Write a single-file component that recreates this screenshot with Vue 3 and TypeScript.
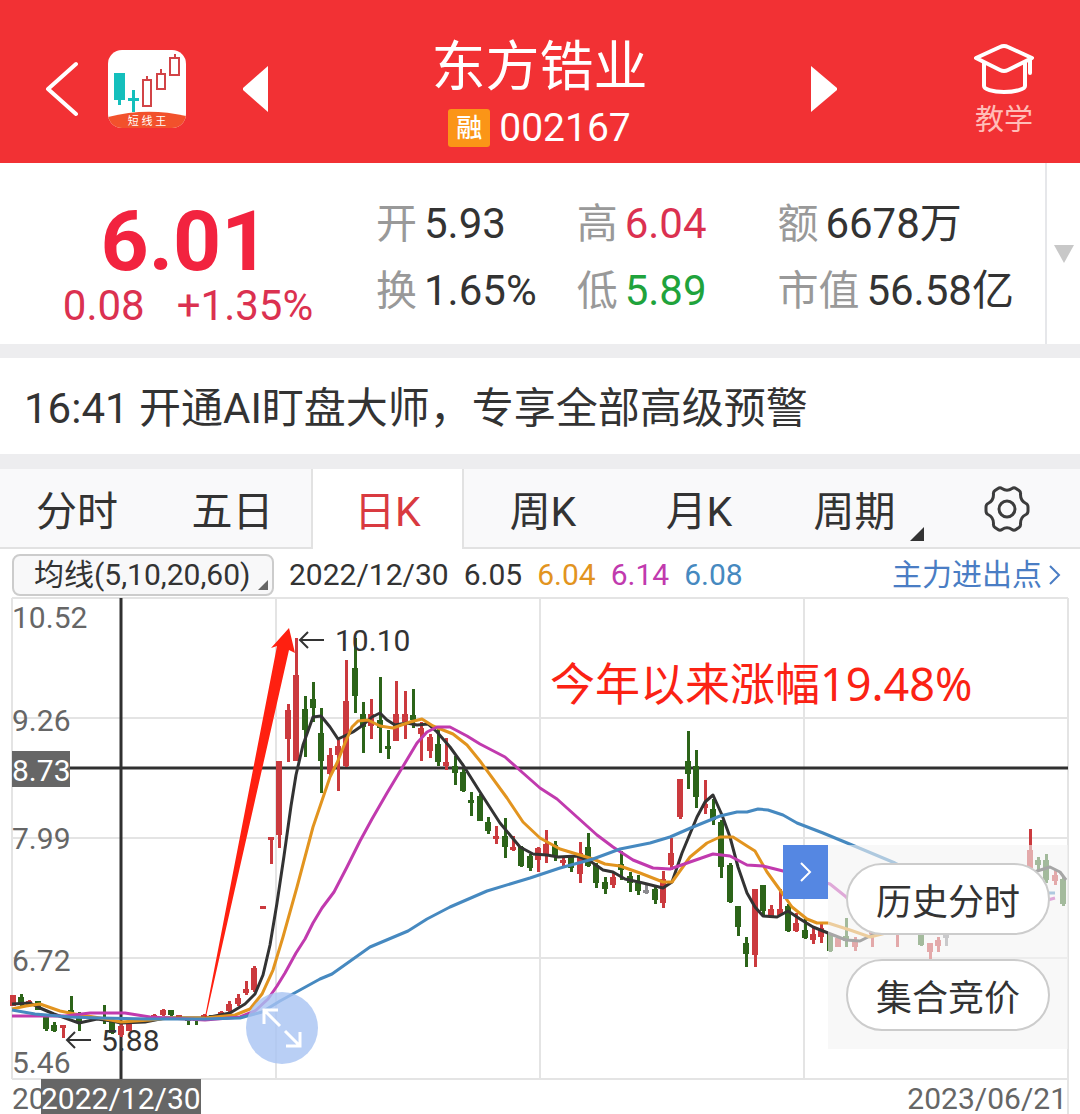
<script setup lang="ts">
import { ref } from 'vue'

type Tone = 'up' | 'down' | 'flat'
type Candle = [x: number, high: number, low: number, bodyTop: number, bodyBottom: number, tone: Tone]
type Point = [number, number]

const quotes = [
  { label: '开', value: '5.93', tone: '' },
  { label: '高', value: '6.04', tone: 'rise' },
  { label: '额', value: '6678万', tone: '' },
  { label: '换', value: '1.65%', tone: '' },
  { label: '低', value: '5.89', tone: 'fall' },
  { label: '市值', value: '56.58亿', tone: '' },
]

const tabs = ['分时', '五日', '日K', '周K', '月K', '周期']
const activeTab = ref('日K')

const averages = [
  { value: '6.05', cls: 'ma5' },
  { value: '6.04', cls: 'ma10' },
  { value: '6.14', cls: 'ma20' },
  { value: '6.08', cls: 'ma60' },
]

const axis = [
  { y: 628, text: '10.52' },
  { y: 731, text: '9.26' },
  { y: 849, text: '7.99' },
  { y: 971, text: '6.72' },
  { y: 1073, text: '5.46' },
]

const candles: Candle[] = [
  [13, 995, 1006, 995, 1006, 'up'], [21, 994, 1006, 997, 1005, 'down'], [29, 1000, 1006, 1001, 1006, 'up'],
  [38, 1001, 1010, 1001, 1010, 'down'], [46, 1014, 1031, 1016, 1029, 'down'], [54, 1022, 1032, 1025, 1031, 'down'],
  [63, 1025, 1038, 1025, 1028, 'up'], [71, 996, 1014, 1010, 1013, 'down'], [79, 1012, 1031, 1017, 1022, 'down'],
  [104, 1005, 1024, 1017, 1019, 'down'], [112, 1020, 1034, 1022, 1033, 'down'], [121, 1024, 1037, 1026, 1035, 'up'],
  [129, 1023, 1031, 1023, 1031, 'up'], [154, 1014, 1020, 1015, 1018, 'up'], [163, 1009, 1016, 1010, 1015, 'up'],
  [171, 1010, 1016, 1010, 1015, 'down'], [179, 1015, 1019, 1015, 1018, 'up'], [188, 1018, 1025, 1018, 1021, 'down'],
  [196, 1018, 1025, 1018, 1021, 'down'], [204, 1014, 1019, 1015, 1018, 'up'], [212, 1015, 1018, 1015, 1018, 'down'],
  [221, 1011, 1016, 1012, 1015, 'up'], [229, 1001, 1015, 1004, 1011, 'up'], [238, 994, 1006, 998, 1004, 'up'],
  [246, 981, 995, 989, 993, 'up'], [254, 966, 992, 968, 990, 'up'], [263, 906, 909, 906, 909, 'up'],
  [271, 837, 864, 837, 840, 'up'], [279, 761, 848, 761, 835, 'up'], [288, 704, 762, 710, 739, 'up'],
  [296, 638, 761, 675, 761, 'up'], [305, 696, 757, 709, 730, 'down'], [313, 682, 722, 699, 708, 'down'],
  [321, 708, 793, 733, 761, 'down'], [330, 748, 775, 755, 774, 'up'], [338, 740, 791, 746, 755, 'up'],
  [346, 660, 767, 701, 766, 'up'], [355, 638, 713, 668, 696, 'down'], [363, 702, 753, 714, 727, 'down'],
  [371, 699, 739, 714, 726, 'up'], [380, 677, 753, 720, 728, 'down'], [388, 730, 759, 746, 749, 'down'],
  [396, 681, 741, 714, 741, 'up'], [405, 691, 739, 714, 722, 'up'], [413, 689, 728, 715, 720, 'down'],
  [421, 722, 761, 728, 734, 'up'], [430, 734, 758, 737, 751, 'up'], [438, 728, 766, 744, 762, 'down'],
  [446, 738, 770, 762, 766, 'up'], [455, 756, 785, 766, 773, 'down'], [463, 769, 792, 772, 791, 'down'],
  [471, 792, 816, 800, 803, 'down'], [480, 794, 821, 796, 821, 'down'], [488, 817, 834, 822, 831, 'down'],
  [496, 826, 844, 836, 839, 'up'], [505, 818, 858, 836, 847, 'down'], [513, 836, 851, 847, 850, 'up'],
  [521, 846, 867, 847, 866, 'down'], [530, 854, 871, 856, 868, 'down'], [538, 847, 872, 848, 860, 'up'],
  [546, 830, 863, 844, 855, 'up'], [555, 841, 861, 845, 857, 'down'], [563, 857, 866, 860, 863, 'up'],
  [571, 855, 872, 857, 868, 'down'], [580, 842, 883, 853, 874, 'up'], [588, 833, 867, 847, 866, 'down'],
  [596, 863, 888, 865, 883, 'down'], [605, 877, 894, 882, 889, 'down'], [613, 872, 888, 877, 885, 'up'],
  [621, 851, 880, 864, 870, 'down'], [630, 872, 892, 876, 883, 'down'], [638, 875, 895, 883, 891, 'down'],
  [646, 883, 894, 890, 893, 'flat'], [655, 887, 904, 889, 900, 'down'], [663, 871, 908, 879, 903, 'up'],
  [671, 838, 870, 853, 865, 'up'], [680, 779, 819, 779, 817, 'up'], [688, 731, 789, 761, 774, 'down'],
  [696, 750, 808, 766, 797, 'down'], [705, 780, 814, 804, 808, 'up'], [713, 799, 825, 809, 820, 'down'],
  [721, 820, 878, 822, 867, 'down'], [730, 863, 903, 865, 902, 'down'], [738, 906, 936, 906, 927, 'down'],
  [746, 937, 967, 943, 954, 'down'], [755, 889, 967, 889, 955, 'up'], [763, 885, 916, 885, 911, 'down'],
  [771, 905, 918, 909, 917, 'up'], [780, 889, 916, 909, 915, 'up'], [788, 904, 932, 906, 931, 'down'],
  [796, 913, 932, 923, 931, 'up'], [805, 917, 939, 930, 938, 'down'], [813, 927, 944, 934, 940, 'up'],
  [821, 923, 943, 928, 937, 'up'], [830, 933, 952, 934, 951, 'down'], [838, 937, 947, 938, 947, 'up'],
  [846, 918, 947, 936, 941, 'down'], [855, 937, 951, 940, 947, 'up'], [872, 920, 947, 928, 934, 'up'],
  [897, 920, 947, 920, 930, 'up'], [921, 930, 946, 932, 945, 'down'], [930, 943, 959, 943, 952, 'up'],
  [938, 937, 952, 940, 946, 'up'], [946, 932, 946, 934, 938, 'flat'], [1030, 829, 870, 850, 868, 'up'],
  [1038, 857, 870, 860, 865, 'down'], [1046, 854, 883, 860, 880, 'down'], [1055, 870, 885, 875, 881, 'up'],
  [1063, 877, 906, 879, 904, 'down'],
]

const ma5: Point[] = [
  [12, 1004], [30, 1003], [40, 1008], [54, 1014], [79, 1023], [97, 1019], [112, 1021], [121, 1023], [145, 1022],
  [165, 1018], [205, 1018], [230, 1013], [245, 1004], [255, 994], [263, 975], [270, 945], [277, 903], [284, 856],
  [291, 806], [296, 775], [303, 745], [313, 717], [321, 716], [330, 727], [338, 739], [353, 732], [363, 725],
  [372, 717], [380, 713], [387, 720], [395, 725], [407, 723], [417, 725], [428, 724], [437, 732], [450, 747],
  [463, 765], [480, 792], [500, 823], [520, 847], [533, 854], [547, 855], [558, 857], [577, 856], [590, 861],
  [603, 870], [613, 872], [625, 879], [643, 883], [663, 888], [672, 882], [682, 853], [697, 817], [705, 802],
  [713, 795], [722, 815], [730, 837], [738, 867], [747, 893], [755, 907], [763, 916], [777, 917], [788, 911],
  [800, 919], [813, 927], [828, 933], [846, 940], [860, 941], [872, 935], [900, 930],
]
const ma5Tail: Point[] = [[1034, 872], [1050, 867], [1060, 872], [1066, 880]]
const ma10: Point[] = [
  [12, 1009], [26, 1006], [40, 1004], [60, 1011], [75, 1014], [100, 1018], [121, 1022], [150, 1020], [170, 1018],
  [205, 1018], [235, 1015], [250, 1009], [262, 994], [273, 970], [283, 937], [297, 887], [313, 827], [330, 777],
  [337, 763], [345, 743], [352, 727], [358, 721], [368, 720], [380, 726], [393, 728], [410, 722], [422, 719],
  [433, 726], [453, 734], [467, 745], [480, 761], [507, 798], [523, 822], [540, 838], [560, 849], [580, 855],
  [593, 859], [605, 864], [620, 866], [640, 873], [663, 882], [672, 882], [690, 857], [707, 843], [720, 837],
  [733, 837], [747, 846], [755, 851], [767, 872], [780, 890], [792, 907], [807, 919], [817, 923], [828, 923],
  [850, 930], [870, 937], [890, 932], [910, 925],
]
const ma20: Point[] = [
  [12, 1016], [65, 1016], [90, 1013], [125, 1013], [150, 1017], [205, 1020], [240, 1017], [255, 1011], [268, 999],
  [277, 986], [285, 973], [296, 953], [305, 939], [313, 923], [322, 908], [334, 892], [347, 867], [360, 841],
  [372, 819], [387, 793], [402, 768], [417, 743], [427, 732], [437, 727], [450, 727], [467, 736], [480, 744],
  [505, 757], [523, 773], [540, 788], [557, 799], [577, 817], [597, 835], [613, 847], [633, 860], [653, 868],
  [670, 869], [690, 862], [713, 854], [730, 856], [747, 865], [763, 866], [783, 871], [800, 876], [830, 884],
  [845, 896], [860, 912],
]
const ma60: Point[] = [
  [12, 1010], [35, 1014], [70, 1017], [100, 1018], [150, 1019], [205, 1019], [240, 1018], [262, 1012], [280, 1001],
  [300, 990], [320, 979], [332, 974], [370, 947], [408, 931], [427, 919], [450, 907], [487, 891], [530, 878],
  [560, 868], [593, 859], [620, 849], [650, 843], [670, 837], [693, 827], [720, 816], [737, 812], [747, 812],
  [758, 809], [768, 810], [783, 815], [797, 823], [823, 833], [852, 845], [895, 863], [920, 875],
]

const lines = [
  { cls: 'ma5', points: ma5 },
  { cls: 'ma5', points: ma5Tail },
  { cls: 'ma10', points: ma10 },
  { cls: 'ma20', points: ma20 },
  { cls: 'ma60', points: ma60 },
  { cls: 'ma20', points: [[1044, 901], [1055, 898]] as Point[] },
  { cls: 'ma60', points: [[1044, 893], [1055, 893]] as Point[] },
]

const toPoints = (points: Point[]) => points.map((p) => p.join(',')).join(' ')
</script>

<template>
  <main class="page">
    <header class="top">
      <div class="side">
        <button class="plain" aria-label="返回">
          <svg width="33" height="56" viewBox="0 0 33 56"><path d="M31 3 3 28 31 53" fill="none" stroke="#fff" stroke-width="4" stroke-linecap="round" stroke-linejoin="round" /></svg>
        </button>
        <button class="plain logo" aria-label="短线王">
          <svg width="78" height="78" viewBox="0 0 78 78">
            <defs><clipPath id="tile"><rect width="78" height="78" rx="14" /></clipPath></defs>
            <g clip-path="url(#tile)">
              <rect width="78" height="78" fill="#fff" />
              <path d="M0 67Q39 57 78 66V78H0Z" fill="#f2512c" />
              <g fill="#14bfbc">
                <path d="M6 23h11v27h-4v5h-3v-5H6ZM24 40h3v8h4v3h-4v11h-3V51h-4v-3h4Z" />
              </g>
              <g fill="none" stroke="#d24447" stroke-width="2">
                <path d="M35 30h8v26h-8ZM39 26v4M49 24h8v15h-8ZM53 19v5M62 8h9v17h-9ZM67 4v4" />
              </g>
              <text x="39" y="75" text-anchor="middle" font-size="11" fill="#fff">短 线 王</text>
            </g>
          </svg>
        </button>
        <button class="plain prev" aria-label="上一只">
          <svg width="26" height="48" viewBox="0 0 26 48"><path d="M26 1V47L1 25V23Z" fill="#fff" /></svg>
        </button>
      </div>
      <div class="title">
        <h1>东方锆业</h1>
        <p class="code"><span class="tag">融</span>002167</p>
      </div>
      <div class="side right">
        <button class="plain" aria-label="下一只">
          <svg width="26" height="48" viewBox="0 0 26 48"><path d="M0 1V47L26 25V23Z" fill="#fff" /></svg>
        </button>
        <button class="plain teach">
          <svg width="60" height="52" viewBox="0 0 60 52" fill="none" stroke="#fff" stroke-width="4" stroke-linecap="round" stroke-linejoin="round">
            <path d="M30 3q2 0 4 1L58 15 34 27q-4 2-8 0L2 15 26 4q2-1 4-1Z" />
            <path d="M10 20V43c0 3 8 6 20 6s21-3 21-6V20M56 16V30" />
          </svg>
          <span>教学</span>
        </button>
      </div>
    </header>

    <section class="quote">
      <div class="price">
        <strong>6.01</strong>
        <p><span>0.08</span><span>+1.35%</span></p>
      </div>
      <dl class="stats">
        <div v-for="q in quotes" :key="q.label">
          <dt>{{ q.label }}</dt>
          <dd :class="q.tone">{{ q.value }}</dd>
        </div>
      </dl>
      <button class="plain more" aria-label="展开">
        <svg width="20" height="18" viewBox="0 0 20 18"><path d="M0 0H20L10 18Z" fill="#c8c8c8" /></svg>
      </button>
    </section>

    <a class="news" href="#news">16:41 开通AI盯盘大师，专享全部高级预警</a>

    <nav class="tabs">
      <button v-for="t in tabs" :key="t" :class="{ active: t === activeTab }" @click="activeTab = t">
        {{ t }}
        <svg v-if="t === '周期'" class="corner" width="14" height="14" viewBox="0 0 14 14"><path d="M14 0V14H0Z" fill="#333" /></svg>
      </button>
      <button class="settings" aria-label="设置">
        <svg class="gear" width="46" height="46" viewBox="0 0 46 46" fill="none" stroke="#3c3c3c" stroke-width="3" stroke-linejoin="round">
          <path d="M14 2.500Q16 1 18 2.500Q23 6 28 2.500Q30 1 32 2.500L35 4.500Q37 6 36.500 8.500Q36.500 15 42 17.500Q44 18.500 44 21V25Q44 27.500 42 28.500Q36.500 31 36.500 37.500Q37 40 35 41.500L32 43.500Q30 45 28 43.500Q23 40 18 43.500Q16 45 14 43.500L11 41.500Q9 40 9.500 37.500Q9.500 31 4 28.500Q2 27.500 2 25V21Q2 18.500 4 17.500Q9.500 15 9.500 8.500Q9 6 11 4.500Z" />
          <circle cx="23" cy="23" r="8" />
        </svg>
      </button>
    </nav>

    <div class="indicator">
      <div class="picker">
        <select aria-label="均线">
          <option>均线(5,10,20,60)</option>
        </select>
        <svg class="mark" width="10" height="10" viewBox="0 0 10 10"><path d="M10 0V10H0Z" fill="#666" /></svg>
      </div>
      <span>2022/12/30</span>
      <span v-for="a in averages" :key="a.cls" :class="a.cls">{{ a.value }}</span>
      <a class="flow" href="#flow">主力进出点
        <svg width="13" height="22" viewBox="0 0 13 22"><path d="M2 2 11 11 2 20" fill="none" stroke="#4a7dc4" stroke-width="2" /></svg>
      </a>
    </div>

    <section class="chart">
      <svg class="plot" viewBox="0 597 1080 517" role="img" aria-label="日K线图">
        <g class="grid">
          <path d="M12 598H1068M12 718H1068M12 838H1068M12 958H1068M12 1079H1068" />
          <path d="M12 598V1079M276 598V1079M540 598V1079M804 598V1079M1068 598V1114" />
        </g>
        <g class="axis">
          <text v-for="a in axis" :key="a.text" x="12" :y="a.y">{{ a.text }}</text>
        </g>
        <path class="cross" d="M12 768H1068M121 598V1079" />
        <g v-for="c in candles" :key="c[0]" :class="c[5]">
          <rect :x="c[0] - 1" :y="c[1]" width="3" :height="c[2] - c[1]" />
          <rect :x="c[0] - 3" :y="c[3]" width="6" :height="c[4] - c[3]" />
        </g>
        <polyline v-for="(l, i) in lines" :key="i" class="line" :class="l.cls" :points="toPoints(l.points)" />
        <g class="note">
          <path d="M324 640H300M308 632 300 640 308 648" />
          <text x="335" y="651">10.10</text>
          <path d="M91 1040H67M75 1032 67 1040 75 1048" />
          <text x="101" y="1051">5.88</text>
        </g>
        <path d="M289 628 295 653 289 650 206 1017H205L277 646 271 648Z" fill="#ff2010" />
        <text class="remark" x="550" y="701">今年以来涨幅19.48%</text>
        <rect x="12" y="751" width="58" height="36" fill="#666" />
        <text class="badge" x="12" y="781">8.73</text>
        <g class="axis">
          <text x="12" y="1109">20</text>
          <text x="1067" y="1109" text-anchor="end">2023/06/21</text>
        </g>
        <rect x="41" y="1079" width="160" height="35" fill="#666" />
        <text class="badge" x="41" y="1109">2022/12/30</text>
      </svg>

      <button class="zoom" aria-label="全屏">
        <svg width="40" height="40" viewBox="0 0 40 40" fill="none" stroke="#fff" stroke-width="3">
          <path d="M18 18 3 3M2 16V2H16M23 23 37 37M38 24V38H24" />
        </svg>
      </button>

      <div class="drawer">
        <button class="handle" aria-label="收起">
          <svg width="12" height="20" viewBox="0 0 12 20"><path d="M1 1 10 10 1 19" fill="none" stroke="#fff" stroke-width="2" /></svg>
        </button>
        <div class="panel">
          <button>历史分时</button>
          <button>集合竞价</button>
        </div>
      </div>
    </section>
  </main>
</template>

<style>
body {
  margin: 0;
  background: #fff;
}
</style>

<style scoped>
.page {
  font-family: Roboto, "Noto Sans CJK SC", sans-serif;
  color: #333;
  background: #fff;
  overflow: hidden;
}
button,
select {
  font: inherit;
  color: inherit;
  padding: 0;
  border: 0;
  background: none;
  cursor: pointer;
}
svg {
  display: block;
}
a {
  text-decoration: none;
}
h1,
p,
dl,
dd {
  margin: 0;
}
.plain {
  flex: none;
}

.top {
  display: grid;
  grid-template-columns: 1fr auto 1fr;
  align-items: center;
  padding: 24px 46px 9px 45px;
  background: #f23134;
  color: #fff;
}
.side {
  display: flex;
  align-items: center;
}
.logo {
  margin-left: 30px;
}
.prev {
  margin-left: 56px;
}
.right {
  justify-content: flex-end;
  gap: 137px;
}
.title {
  padding-bottom: 10px;
  text-align: center;
}
h1 {
  font-size: 54px;
  line-height: 88px;
  font-weight: 400;
}
.code {
  display: flex;
  justify-content: center;
  align-items: center;
  gap: 9px;
  height: 32px;
  font-size: 39px;
  line-height: 32px;
}
.tag {
  width: 42px;
  font-size: 26px;
  line-height: 38px;
  border-radius: 3px;
  background: #fb9517;
  font-weight: 500;
}
.teach {
  display: flex;
  flex-direction: column;
  align-items: center;
  gap: 10px;
}
.teach span {
  font-size: 29px;
  line-height: 30px;
  color: #ffbdb8;
}

.quote {
  display: flex;
  align-items: stretch;
  border-bottom: 14px solid #ededef;
}
.price {
  flex: 0 0 376px;
  text-align: center;
  color: #f2233f;
  padding: 37px 0 16px;
  box-sizing: border-box;
}
.price strong {
  display: block;
  font-size: 84px;
  line-height: 84px;
  padding-right: 6px;
}
.price p {
  display: flex;
  justify-content: center;
  gap: 32px;
  font-size: 42px;
  line-height: 44px;
  color: #db3150;
}
.stats {
  flex: 1;
  display: grid;
  grid-template-columns: 3fr 3fr 4fr;
  align-content: center;
  padding-top: 6px;
}
.stats div {
  display: flex;
  align-items: baseline;
  gap: 7px;
  height: 67px;
  line-height: 67px;
  white-space: nowrap;
}
dt {
  font-size: 41px;
  color: #999;
}
dd {
  font-size: 42px;
}
.rise {
  color: #db3150;
}
.fall {
  color: #1fa33c;
}
.more {
  width: 35px;
  padding-left: 7px;
  border-left: 2px solid #e6e7ea;
}

.news {
  display: block;
  padding: 6px 24px 0;
  font-size: 42px;
  line-height: 90px;
  border-bottom: 15px solid #ededef;
  color: #333;
  white-space: nowrap;
}

.tabs {
  display: grid;
  grid-template-columns: 154fr 157fr 153fr 158fr 154fr 157fr 147fr;
  font-size: 41px;
  line-height: 72px;
  background: #f9f9fa;
}
.tabs button {
  position: relative;
  padding-top: 6px;
  height: 80px;
  box-shadow: inset 0 -2px #e2e2e2;
}
.tabs .settings {
  padding-top: 0;
}
.tabs .active {
  color: #d93a40;
  background: #fff;
  box-shadow: inset 2px 0 #e2e2e2, inset -2px 0 #e2e2e2;
}
.corner {
  position: absolute;
  right: 9px;
  bottom: 8px;
}
.gear {
  margin: 0 auto;
}

.indicator {
  display: flex;
  align-items: center;
  gap: 15px;
  box-sizing: border-box;
  height: 48px;
  padding: 4px 19px 0 12px;
  font-size: 30px;
  line-height: 38px;
  white-space: nowrap;
}
.picker {
  position: relative;
}
.picker select {
  appearance: none;
  display: block;
  box-sizing: border-box;
  width: 262px;
  height: 42px;
  padding-left: 20px;
  border: 2px solid #ccc;
  border-radius: 8px;
  background: #f8f8f9;
}
.mark {
  position: absolute;
  right: 6px;
  bottom: 6px;
}
.flow {
  display: flex;
  align-items: center;
  gap: 6px;
  margin-left: auto;
  color: #4a7dc4;
}
.ma5 {
  color: #333;
}
.ma10 {
  color: #e2941f;
}
.ma20 {
  color: #c13aae;
}
.ma60 {
  color: #4689c0;
}

.chart {
  position: relative;
}
.plot {
  width: 100%;
  height: auto;
  font-size: 30px;
}
.grid {
  stroke: #e4e4e4;
  stroke-width: 2;
}
.axis {
  fill: #666;
}
.cross {
  stroke: #303030;
  stroke-width: 3;
}
.up {
  fill: #cb3a3e;
}
.down {
  fill: #2c6419;
}
.flat {
  fill: #8b8b8f;
}
.line {
  fill: none;
  stroke: currentColor;
  stroke-width: 3;
  stroke-linejoin: round;
}
.note path {
  fill: none;
  stroke: #333;
  stroke-width: 2;
}
.note text {
  fill: #333;
}
.remark {
  font-family: "Noto Sans", "Noto Sans CJK SC", sans-serif;
  font-size: 45px;
  fill: #fb2214;
}
.badge {
  fill: #fff;
}
.zoom {
  position: absolute;
  left: 246px;
  bottom: 50px;
  width: 72px;
  height: 72px;
  border-radius: 50%;
  background: rgba(168, 195, 243, 0.8);
}
.zoom svg {
  margin: 0 auto;
}
.drawer {
  position: absolute;
  top: 248px;
  right: 12px;
  display: flex;
  align-items: flex-start;
}
.handle {
  width: 45px;
  height: 54px;
  background: #5587e2;
}
.handle svg {
  margin: 0 auto;
}
.panel {
  display: flex;
  flex-direction: column;
  gap: 24px;
  padding: 18px;
  background: rgba(244, 244, 244, 0.6);
}
.panel button {
  box-sizing: border-box;
  width: 204px;
  height: 72px;
  border: 2px solid #ccc;
  border-radius: 36px;
  background: #fff;
  font-size: 36px;
}
</style>
